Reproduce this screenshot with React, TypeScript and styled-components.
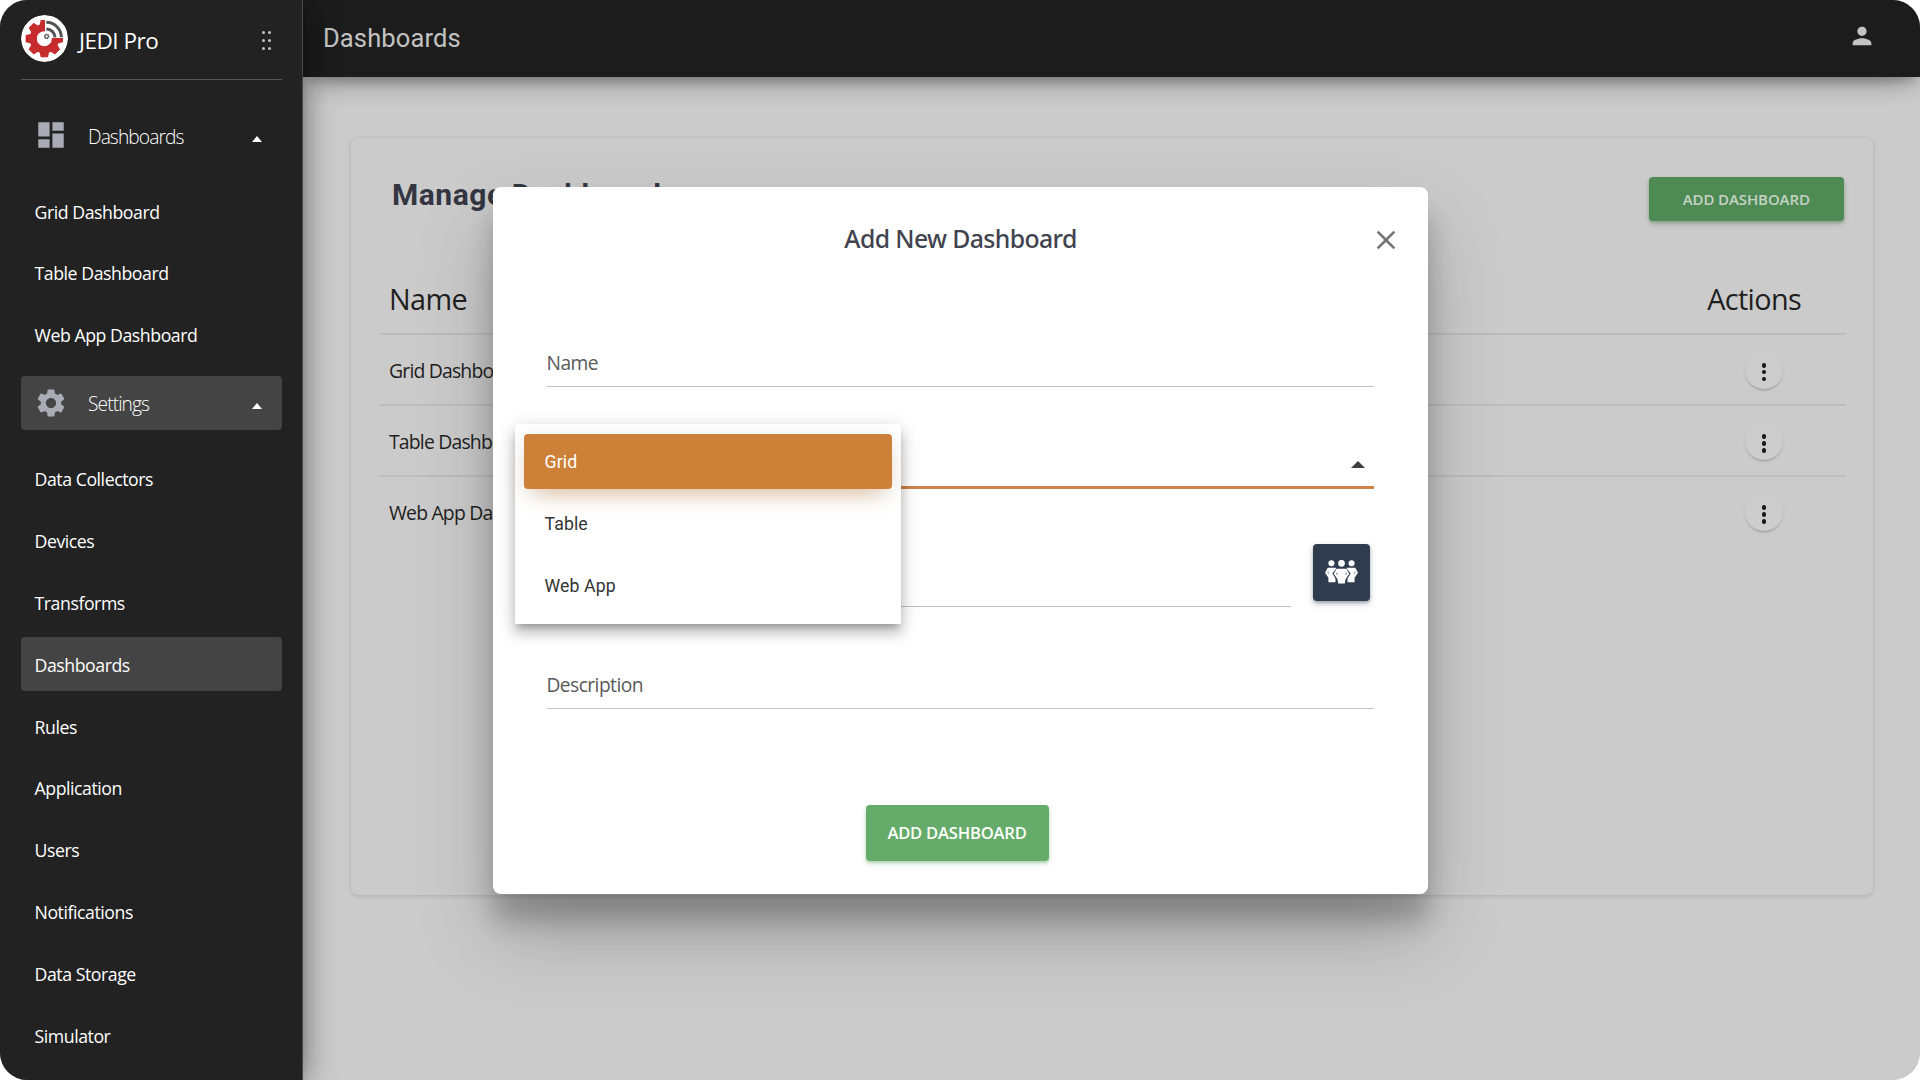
import React from "react";
import styled, { createGlobalStyle, css } from "styled-components";
import { MdDashboard, MdSettings, MdPerson, MdClose } from "react-icons/md";

const sans = `"Open Sans", "Noto Sans", sans-serif`;

const GlobalStyle = createGlobalStyle`
  *, *::before, *::after { box-sizing: border-box; }
  html, body { margin: 0; background: #fff; }
  body { font-family: ${sans}; overflow: hidden; }
  button { border: 0; padding: 0; margin: 0; font: inherit; }
  h1, h2, h3, p { margin: 0; }
`;

const Shell = styled.div`
  position: relative;
  display: flex;
  width: 1920px;
  height: 1080px;
  overflow: hidden;
  border-radius: 27px;
  background: #cbcbcb;
`;

/* ---------- sidebar ---------- */

const Sidebar = styled.aside`
  position: relative;
  z-index: 3;
  flex: none;
  width: 303px;
  height: 1080px;
  padding: 0 20px 0 20.5px;
  background: #222;
  border-right: 1px solid #4a4a4a;
  box-shadow: 0 10px 30px -12px rgba(0, 0, 0, 0.42), 0 4px 25px 0 rgba(0, 0, 0, 0.12),
    0 8px 10px -5px rgba(0, 0, 0, 0.2), 0 0 34px 2px rgba(0, 0, 0, 0.24);
`;

const Brand = styled.div`
  display: flex;
  align-items: center;
  height: 80px;
  padding: 0 11px 3px 0;
  border-bottom: 1px solid #565656;
`;

const BrandName = styled.span`
  flex: 1;
  padding: 5px 0 0 11.5px;
  font-size: 22.5px;
  line-height: 30px;
  letter-spacing: -0.5px;
  color: #fff;
`;

const Logo = styled.svg`
  flex: none;
  width: 47px;
  height: 47px;
  border-radius: 50%;
`;

const DragDots = styled.div`
  display: grid;
  grid-template-columns: 3px 3px;
  gap: 5px 3.5px;
  padding-top: 5px;
`;

const DragDot = styled.i`
  width: 3px;
  height: 3px;
  border-radius: 50%;
  background: #c4c4c4;
`;

const Group = styled.nav<{ $top: number }>`
  margin-top: ${(p) => p.$top}px;
`;

const GroupHead = styled.div<{ $active?: boolean }>`
  display: flex;
  align-items: center;
  height: 54.4px;
  padding: 0 20.5px 0 13.5px;
  margin-bottom: 21px;
  border-radius: 4px;
  background: ${(p) => (p.$active ? "#444" : "transparent")};
  color: #a9abb5;
`;

const GroupName = styled.span`
  flex: 1;
  padding: 3px 0 0 20px;
  font-size: 19.2px;
  font-weight: 300;
  line-height: 28px;
  letter-spacing: -0.92px;
  color: #fff;
`;

const Caret = styled.i<{ $color: string; $w: number; $h: number; $down?: number }>`
  width: 0;
  height: 0;
  margin-top: ${(p) => p.$down ?? 7}px;
  border-left: ${(p) => p.$w}px solid transparent;
  border-right: ${(p) => p.$w}px solid transparent;
  border-bottom: ${(p) => p.$h}px solid ${(p) => p.$color};
`;

const NavItem = styled.div<{ $active?: boolean }>`
  display: flex;
  align-items: center;
  height: 54.4px;
  margin-bottom: 7.45px;
  padding: 2px 0 0 14px;
  border-radius: 4px;
  font-size: 17.7px;
  letter-spacing: -0.44px;
  color: #fff;
  background: ${(p) => (p.$active ? "#444" : "transparent")};
`;

/* ---------- page ---------- */

const Page = styled.div`
  display: flex;
  flex-direction: column;
  flex: 1;
  min-width: 0;
`;

const AppBar = styled.header`
  display: flex;
  align-items: center;
  justify-content: space-between;
  flex: none;
  height: 77px;
  padding: 0 44px 0 20px;
  background: #1c1c1c;
  color: #c3c3c3;
  box-shadow: 0 10px 30px -12px rgba(0, 0, 0, 0.42), 0 4px 25px 0 rgba(0, 0, 0, 0.12),
    0 8px 10px -5px rgba(0, 0, 0, 0.2);
`;

const PageTitle = styled.h1`
  margin-top: -1px;
  font: 400 25.5px/34px Roboto, sans-serif;
  letter-spacing: 0.12px;
`;

const UserIcon = styled(MdPerson)`
  margin-top: -5px;
`;

const Card = styled.main`
  width: 1522px;
  height: 757px;
  margin: 61px 0 0 48px;
  padding: 0 27px 0 27.5px;
  border-radius: 7px;
  background: #cbcbcb;
  box-shadow: 0 1px 4px rgba(0, 0, 0, 0.14);
`;

const CardHead = styled.div`
  display: flex;
  align-items: flex-start;
  justify-content: space-between;
  height: 127px;
  padding: 38.5px 2px 0 13.5px;
`;

const CardTitle = styled.h2`
  margin-top: -1px;
  font: 700 30px/38px Roboto, sans-serif;
  letter-spacing: 0.52px;
  color: #343741;
`;

const buttonText = css`
  display: flex;
  align-items: center;
  justify-content: center;
  border-radius: 4px;
  font-family: ${sans};
  font-weight: 600;
`;

const DimButton = styled.button`
  ${buttonText}
  width: 195.5px;
  height: 44px;
  font-size: 15px;
  letter-spacing: -0.1px;
  color: #c5d3c5;
  background: #4e8a53;
  box-shadow: 0 2px 3px rgba(78, 138, 83, 0.45), 0 3px 6px rgba(0, 0, 0, 0.12);
`;

const TableRow = styled.div<{ $head?: boolean; $last?: boolean }>`
  display: flex;
  align-items: center;
  justify-content: space-between;
  height: ${(p) => (p.$head ? 70 : 71.2)}px;
  padding: 0 45px 0 10.5px;
  border-bottom: 2px solid ${(p) => (p.$last ? "transparent" : "#bdbdbd")};
  font-size: ${(p) => (p.$head ? 28.8 : 19.4)}px;
  letter-spacing: ${(p) => (p.$head ? -0.65 : -0.82)}px;
  line-height: 1.3;
  color: #1f1f1f;
`;

const CellText = styled.span`
  padding-top: 2px;
`;

const MoreButton = styled.button`
  display: grid;
  align-content: center;
  justify-items: center;
  gap: 2.2px;
  width: 38px;
  height: 38px;
  margin: 0 18px 0 0;
  padding-top: 5px;
  border-radius: 50%;
  background: #cdcdcd;
  box-shadow: 0 2px 2px -1px rgba(0, 0, 0, 0.2), 0 2px 5px -1px rgba(0, 0, 0, 0.08);
`;

const MoreDot = styled.i`
  width: 4.8px;
  height: 4.8px;
  border-radius: 50%;
  background: #161616;
`;

/* ---------- dialog ---------- */

const Overlay = styled.div`
  position: absolute;
  inset: 0;
  z-index: 2;
  display: flex;
  align-items: center;
  justify-content: center;
`;

const Dialog = styled.section`
  position: relative;
  display: flex;
  flex-direction: column;
  width: 935px;
  height: 707px;
  padding: 0 53.5px 0 54px;
  border-radius: 8px;
  background: #fff;
  box-shadow: 0 27px 24px 0 rgba(0, 0, 0, 0.2), 0 40px 77px 0 rgba(0, 0, 0, 0.22);
`;

const DialogHead = styled.header`
  display: grid;
  grid-template-columns: 1fr auto 1fr;
  align-items: center;
  height: 106px;
  margin-right: -27.5px;
  margin-left: -27px;
`;

const DialogTitle = styled.h3`
  grid-column: 2;
  margin-top: -3px;
  font: 500 24.8px/34px "Noto Sans", sans-serif;
  letter-spacing: -0.62px;
  color: #41444f;
`;

const CloseIcon = styled(MdClose)`
  justify-self: end;
  color: #757575;
`;

const Field = styled.div<{ $top: number; $focus?: boolean }>`
  display: flex;
  align-items: center;
  justify-content: space-between;
  flex: none;
  height: 48px;
  margin-top: ${(p) => p.$top}px;
  padding: 1px 9.5px 0 0;
  border-bottom: ${(p) => (p.$focus ? "3px solid #cd8446" : "1px solid #c2c2c2")};
  font-size: 19.2px;
  letter-spacing: -0.55px;
  color: #5a5a5a;
`;

const UserRow = styled.div`
  display: grid;
  grid-template-columns: 1fr auto;
  align-items: start;
  gap: 22px;
  height: 63px;
  margin-top: 55px;
  padding-right: 4.5px;
`;

const GroupButton = styled.button`
  display: flex;
  align-items: center;
  justify-content: center;
  width: 57px;
  height: 57px;
  border-radius: 4px;
  background: #2f3c4e;
  box-shadow: 0 2px 3px rgba(47, 60, 78, 0.3), 0 3px 7px rgba(47, 60, 78, 0.22);
`;

const SubmitButton = styled.button`
  ${buttonText}
  flex: none;
  width: 183px;
  height: 56.5px;
  margin: 96px 0 0 319px;
  font-size: 16.6px;
  letter-spacing: -0.22px;
  color: #fff;
  background: #65ab69;
  box-shadow: 0 2px 3px rgba(101, 171, 105, 0.4), 0 3px 6px rgba(101, 171, 105, 0.2);
`;

const Menu = styled.div`
  position: absolute;
  top: 237px;
  left: 22.5px;
  width: 385.5px;
  height: 200.5px;
  padding: 10.5px 8.5px 0;
  border-radius: 4px 4px 0 0;
  background: #fff;
  box-shadow: 0 6px 6px -3px rgba(0, 0, 0, 0.22), 0 10px 13px 1px rgba(0, 0, 0, 0.15),
    0 4px 18px 2px rgba(0, 0, 0, 0.13);
`;

const Option = styled.div<{ $selected?: boolean }>`
  display: flex;
  align-items: center;
  height: 55px;
  margin-bottom: 7px;
  padding: 1px 0 0 21px;
  border-radius: 4px;
  font: 400 17.7px/24px Roboto, sans-serif;
  letter-spacing: 0.1px;
  color: ${(p) => (p.$selected ? "#fff" : "#333")};
  background: ${(p) => (p.$selected ? "#cd8038" : "transparent")};
  box-shadow: ${(p) =>
    p.$selected
      ? "0 14px 24px -12px rgba(205,128,56,.5), 0 4px 20px rgba(0,0,0,.09)"
      : "none"};
`;

const BrandLogo = () => (
  <Logo viewBox="0 0 141 141">
    <circle cx="70.5" cy="70.5" r="70.5" fill="#fff" />
    <g fill="#c62b2e">
      <circle cx="70" cy="71" r="44" />
      {[0, 45, 90, 135].map((a) => (
        <path
          key={a}
          d="M59 16 Q59 15 60 15 H80 Q81 15 81 16 L85 34 V108 L81 126 Q81 127 80 127 H60 Q59 127 59 126 L55 108 V34 Z"
          transform={`rotate(${a} 70 71)`}
        />
      ))}
    </g>
    <circle cx="70" cy="71" r="22.5" fill="#fff" />
    <path d="M72 4 H137 V69 H72 Z" fill="#fff" />
    <g fill="none" stroke="#505256" strokeWidth="9">
      <path d="M76 22 A45 45 0 0 1 121 67" />
      <path d="M76 42 A26 26 0 0 1 102 67" />
    </g>
    <circle cx="77" cy="64" r="6" fill="none" stroke="#45474a" strokeWidth="4" strokeDasharray="3.2 1.5" />
    <circle cx="77" cy="64" r="5" fill="none" stroke="#45474a" strokeWidth="2" />
  </Logo>
);

const PeopleIcon = () => (
  <svg width="33" height="23.5" viewBox="0 0 98 70" fill="#fff">
    <circle cx="19" cy="9.5" r="9" />
    <circle cx="79" cy="9.5" r="9" />
    <circle cx="49" cy="10" r="10" />
    <path d="M8 23 H32 L33 25 L22 40 L31 55 V66 H10 V53 L0 38 Z" />
    <path d="M90 23 H66 L65 25 L76 40 L67 55 V66 H88 V53 L98 38 Z" />
    <path d="M34 26 H64 L72 41 L61 57 L59 70 H39 L37 57 L26 41 Z" />
    <path d="M36 36 L33 41 L37 47 Z M62 36 L65 41 L61 47 Z M10 33 L7 38 L11 44 Z M88 33 L91 38 L87 44 Z" fill="#6b7582" />
  </svg>
);

const boards = ["Grid Dashboard", "Table Dashboard", "Web App Dashboard"];
const settings = [
  "Data Collectors",
  "Devices",
  "Transforms",
  "Dashboards",
  "Rules",
  "Application",
  "Users",
  "Notifications",
  "Data Storage",
  "Simulator",
];

export default function App() {
  return (
    <>
      <GlobalStyle />
      <Shell>
        <Sidebar>
          <Brand>
            <BrandLogo />
            <BrandName>JEDI Pro</BrandName>
            <DragDots>
              {Array.from({ length: 6 }, (_, i) => (
                <DragDot key={i} />
              ))}
            </DragDots>
          </Brand>
          <Group $top={28}>
            <GroupHead>
              <MdDashboard size={34} />
              <GroupName>Dashboards</GroupName>
              <Caret $color="#fff" $w={5.5} $h={6} />
            </GroupHead>
            {boards.map((name) => (
              <NavItem key={name}>{name}</NavItem>
            ))}
          </Group>
          <Group $top={14.2}>
            <GroupHead $active>
              <MdSettings size={34} />
              <GroupName>Settings</GroupName>
              <Caret $color="#fff" $w={5.5} $h={6} />
            </GroupHead>
            {settings.map((name) => (
              <NavItem key={name} $active={name === "Dashboards"}>
                {name}
              </NavItem>
            ))}
          </Group>
        </Sidebar>

        <Page>
          <AppBar>
            <PageTitle>Dashboards</PageTitle>
            <UserIcon size={28} />
          </AppBar>
          <Card>
            <CardHead>
              <CardTitle>Manage Dashboards</CardTitle>
              <DimButton>ADD DASHBOARD</DimButton>
            </CardHead>
            <TableRow $head>
              <span>Name</span>
              <span>Actions</span>
            </TableRow>
            {boards.map((name, i) => (
              <TableRow key={name} $last={i === boards.length - 1}>
                <CellText>{name}</CellText>
                <MoreButton>
                  <MoreDot />
                  <MoreDot />
                  <MoreDot />
                </MoreButton>
              </TableRow>
            ))}
          </Card>
        </Page>

        <Overlay>
          <Dialog>
            <DialogHead>
              <DialogTitle>Add New Dashboard</DialogTitle>
              <CloseIcon size={32} />
            </DialogHead>
            <Field $top={46}>Name</Field>
            <Field $top={54} $focus>
              <span />
              <Caret $color="#3f3f3f" $w={7} $h={7} $down={2} />
            </Field>
            <UserRow>
              <Field $top={15} />
              <GroupButton>
                <PeopleIcon />
              </GroupButton>
            </UserRow>
            <Field $top={54}>Description</Field>
            <SubmitButton>ADD DASHBOARD</SubmitButton>
            <Menu>
              <Option $selected>Grid</Option>
              <Option>Table</Option>
              <Option>Web App</Option>
            </Menu>
          </Dialog>
        </Overlay>
      </Shell>
    </>
  );
}
